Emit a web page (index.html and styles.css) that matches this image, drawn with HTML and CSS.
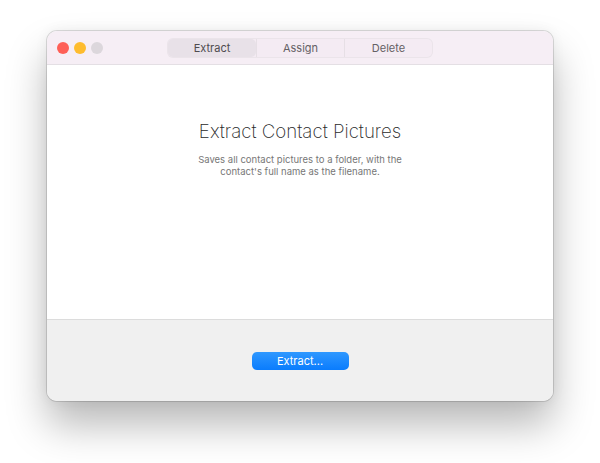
FILE: index.html
```html
<!DOCTYPE html>
<html lang="en">
  <head>
    <meta charset="UTF-8" />
    <meta name="viewport" content="width=device-width, initial-scale=1.0" />
    <title>Contact Pictures</title>
    <link rel="stylesheet" href="styles.css">
  </head>
  <body>
    <div class="window">
      <div class="titlebar">
        <div class="lights">
          <span class="light red"></span>
          <span class="light yellow"></span>
          <span class="light gray"></span>
        </div>
        <div class="segments">
          <button class="segment active">Extract</button>
          <button class="segment">Assign</button>
          <button class="segment">Delete</button>
        </div>
      </div>

      <!-- contenuto principale -->
      <div class="content">
        <h1>Extract Contact Pictures</h1>
        <p>Saves all contact pictures to a folder, with the<br />contact's full name as the filename.</p>
      </div>

      <div class="footer">
        <button class="primary">Extract...</button>
      </div>
    </div>
  </body>
</html>
```

FILE: styles.css
```css
body {
  margin: 0;
  padding-top: 31px;
  min-height: 100vh;
  box-sizing: border-box;
  font-family: Inter, "Liberation Sans", Arial, sans-serif;
  background-color: #ffffff;
}

.window {
  width: 506px;
  height: 370px;
  margin: 0 auto;
  border-radius: 10px;
  overflow: hidden;
  display: flex;
  flex-direction: column;
  box-shadow: 0 0 0 1px rgba(0, 0, 0, 0.13), 0 24px 40px rgba(0, 0, 0, 0.28), 0 0 14px rgba(0, 0, 0, 0.06);
}

.titlebar {
  height: 33px;
  background-color: #f6eef5;
  border-bottom: 1px solid #e4dfe4;
  display: flex;
  align-items: center;
  position: relative;
}

.lights {
  display: flex;
  gap: 5px;
  padding-left: 10px;
}

.light {
  width: 12px;
  height: 12px;
  border-radius: 50%;
}

.red {
  background-color: #fe5f57;
}

.yellow {
  background-color: #febc2e;
}

.gray {
  background-color: #dcd7dc;
}

.segments {
  position: absolute;
  left: 121px;
  top: 8px;
  display: flex;
  height: 18px;
  border-radius: 5px;
  background-color: #f4ebf3;
  box-shadow: 0 0 0 1px #ebe4ea;
}

.segment {
  width: 88px;
  height: 18px;
  border: none;
  background: none;
  font-family: inherit;
  font-size: 11px;
  color: #656165;
  padding: 0;
  border-left: 1px solid #e6dfe5;
}

.segment:first-child {
  border-left: none;
}

.segment.active {
  background-color: #e8e1e8;
  border-radius: 5px;
  color: #4f4c4f;
}

.content {
  flex: 1;
  background-color: #ffffff;
  text-align: center;
  padding-top: 55px;
}

h1 {
  margin: 0;
  font-size: 18.7px;
  font-weight: 250;
  color: #2a2a2a;
}

.content p {
  margin: 11px 0 0;
  font-size: 9.5px;
  line-height: 12px;
  color: #777;
}

.footer {
  height: 82px;
  background-color: #f0f0f0;
  border-top: 1px solid #dcdcdc;
  display: flex;
  justify-content: center;
  padding-top: 32px;
  box-sizing: border-box;
}

.primary {
  width: 97px;
  height: 18px;
  border: none;
  border-radius: 5px;
  background: linear-gradient(#2f98ff, #0a7cfd);
  color: white;
  font-family: inherit;
  font-size: 11px;
  padding: 0;
}
```
